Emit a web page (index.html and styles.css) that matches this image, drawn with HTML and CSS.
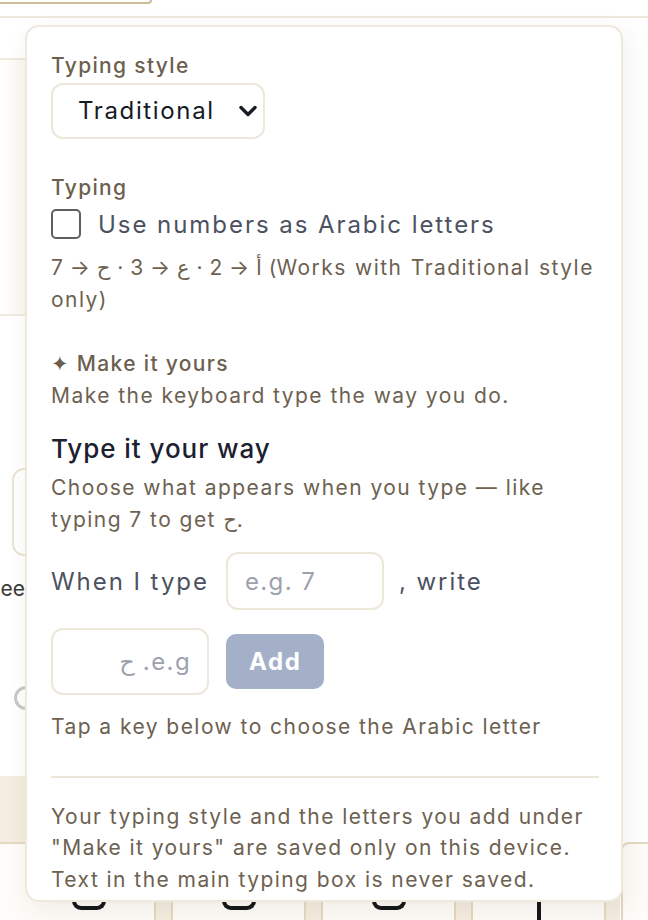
FILE: index.html
```html
<!DOCTYPE html>
<html lang="en">
<head>
<meta charset="utf-8">
<title>Settings</title>
<link rel="stylesheet" href="styles.css">
</head>
<body>
<div class="page">
  <div class="topbar"><div class="top-btn"></div></div>
  <div class="side-card"></div>
  <div class="side-box"></div>
  <div class="side-text">ee</div>
  <div class="side-radio"></div>
  <div class="keyboard">
    <div class="key-row">
      <div class="key first"><span class="glyph-u"></span></div>
      <div class="key"><span class="glyph-u"></span></div>
      <div class="key"><span class="glyph-u"></span></div>
      <div class="key"><span class="glyph-bar"></span></div>
      <div class="key"></div>
    </div>
  </div>

  <div class="popup">
    <div class="label">Typing style</div>
    <div class="select-wrap">
      <select class="select">
        <option>Traditional</option>
      </select>
      <svg class="chevron" width="20" height="14" viewBox="0 0 20 14"><path d="M3 3.5 L10 10.5 L17 3.5" fill="none" stroke="#1a1d26" stroke-width="3.4" stroke-linecap="round" stroke-linejoin="round"/></svg>
    </div>

    <div class="label section">Typing</div>
    <label class="check-row">
      <span class="checkbox"></span>
      <span class="check-text">Use numbers as Arabic letters</span>
    </label>
    <div class="body hint">7 → ح&lrm; · 3 → ع&lrm; · 2 → أ&lrm; (Works with Traditional style only)</div>

    <div class="label section">✦ Make it yours</div>
    <div class="body">Make the keyboard type the way you do.</div>

    <h2 class="heading">Type it your way</h2>
    <div class="body">Choose what appears when you type — like typing 7 to get ح&lrm;.</div>

    <div class="map-row">
      <span class="ctl-text">When I type</span>
      <input class="field" type="text" placeholder="e.g. 7">
      <span class="ctl-text">, write</span>
      <input class="field field-ar" type="text" dir="rtl" placeholder="e.g. ح">
      <button class="add-btn">Add</button>
    </div>
    <div class="body tap">Tap a key below to choose the Arabic letter</div>

    <div class="divider"></div>
    <div class="body footer">Your typing style and the letters you add under "Make it yours" are saved only on this device. Text in the main typing box is never saved.</div>
  </div>
</div>
</body>
</html>
```

FILE: styles.css
```css
* { box-sizing: border-box; }
html, body { margin: 0; padding: 0; }
body {
  font-family: Inter, "Noto Sans", "DejaVu Sans", sans-serif;
  background: #ffffff;
  color: #6d6151;
}
.page {
  position: relative;
  width: 648px;
  height: 920px;
  overflow: hidden;
  background: #ffffff;
}

/* background content */
.topbar {
  height: 18px;
  border-bottom: 2px solid #eee8dc;
}
.top-btn {
  width: 152px;
  height: 4px;
  border-right: 2px solid #cdbc98;
  border-bottom: 2px solid #cdbc98;
  border-bottom-right-radius: 10px;
}
.side-card {
  margin-top: 40px;
  width: 300px;
  height: 258px;
  border-top: 2px solid #efe9de;
  border-bottom: 2px solid #efe9de;
  background: linear-gradient(90deg, #ffffff 0%, #faf6ee 9%, #fbf8f2 100%);
}
.side-box {
  margin-top: 152px;
  margin-left: 12px;
  width: 120px;
  height: 88px;
  border: 2px solid #ebe4d6;
  border-radius: 12px;
}
.side-text {
  margin-top: 18px;
  width: 25px;
  text-align: right;
  font-size: 21px;
  line-height: 30px;
  color: #3b3b3b;
  white-space: nowrap;
  overflow: hidden;
  direction: rtl;
}
.side-radio {
  margin-top: 82px;
  margin-left: 14px;
  width: 24px;
  height: 24px;
  border: 3px solid #c9c9c9;
  border-radius: 50%;
}
.keyboard {
  margin-top: 66px;
  width: 620px;
  height: 200px;
  background: #f4eddf;
  padding-top: 66px;
}
.key-row {
  display: flex;
  gap: 15px;
  margin-left: -135px;
}
.key {
  flex: 0 0 135px;
  height: 90px;
  background: #fefcf8;
  border: 2px solid #e4d8c0;
  border-radius: 8px;
  display: flex;
  justify-content: center;
  padding-top: 52px;
}
.key.first { flex-basis: 291px; padding-left: 156px; }
.glyph-u {
  width: 34px;
  height: 14px;
  border: 4px solid #15161a;
  border-top: none;
  border-radius: 0 0 9px 9px;
}
.glyph-bar {
  width: 4px;
  height: 24px;
  background: #15161a;
}

/* popup */
.popup {
  position: absolute;
  left: 25px;
  top: 25px;
  width: 598px;
  height: 877px;
  overflow: hidden;
  background: #ffffff;
  border: 2px solid #efe9dd;
  border-radius: 14px;
  box-shadow: 4px 8px 24px rgba(60, 50, 30, 0.08);
  padding: 23px 22px 0 24px;
}
.label {
  font-size: 21px;
  line-height: 31.5px;
  font-weight: 500;
  letter-spacing: 1.33px;
  color: #6c5f4f;
}
.section { margin-top: 33px; }
.select-wrap {
  position: relative;
  width: 214px;
  margin-top: 1px;
}
.select {
  display: block;
  width: 214px;
  height: 56px;
  appearance: none;
  -webkit-appearance: none;
  background: #ffffff;
  border: 2px solid #ede7da;
  border-radius: 12px;
  padding: 0 0 0 25px;
  font-family: inherit;
  font-size: 24px;
  letter-spacing: 1.64px;
  color: #141a26;
}
.chevron {
  position: absolute;
  right: 7px;
  top: 21px;
}
.check-row {
  display: flex;
  align-items: center;
  gap: 17px;
  height: 40px;
  margin-top: 1px;
}
.checkbox {
  width: 30px;
  height: 30px;
  border: 2px solid #5f5f5f;
  border-radius: 5px;
  flex: 0 0 30px;
}
.check-text {
  font-size: 24px;
  letter-spacing: 1.95px;
  color: #4c5262;
}
.body {
  font-size: 21px;
  line-height: 31.5px;
  letter-spacing: 1.45px;
  color: #6d6151;
}
.hint { margin-top: 8px; word-spacing: 1px; }
.heading {
  margin: 20px 0 0 0;
  font-size: 26px;
  line-height: 36px;
  font-weight: 500;
  letter-spacing: 0.95px;
  color: #1b2130;
}
.heading + .body { margin-top: 5px; }
.map-row {
  display: flex;
  flex-wrap: wrap;
  align-items: center;
  column-gap: 17px;
  row-gap: 18px;
  margin-top: 17px;
}
.ctl-text {
  font-size: 24px;
  letter-spacing: 1.95px;
  color: #4c5262;
}
.ctl-text + .field + .ctl-text { margin-left: -2px; }
.field {
  width: 158px;
  height: 58px;
  border: 2px solid #ede7da;
  border-radius: 12px;
  padding: 0 17px;
  font-family: inherit;
  font-size: 24px;
  letter-spacing: 1.4px;
  color: #1b2130;
  background: #fff;
}
.field::placeholder { color: #9ca2ad; }
.field-ar { height: 67px; padding: 0 16px; }
.add-btn {
  height: 55px;
  padding: 0 23px;
  border: none;
  border-radius: 10px;
  background: #a3b0c8;
  color: #ffffff;
  font-family: inherit;
  font-size: 24px;
  font-weight: 700;
  letter-spacing: 1.6px;
}
.tap { margin-top: 16px; }
.divider {
  margin-top: 33px;
  height: 2px;
  background: #ece6da;
}
.footer { margin-top: 23px; }
```
